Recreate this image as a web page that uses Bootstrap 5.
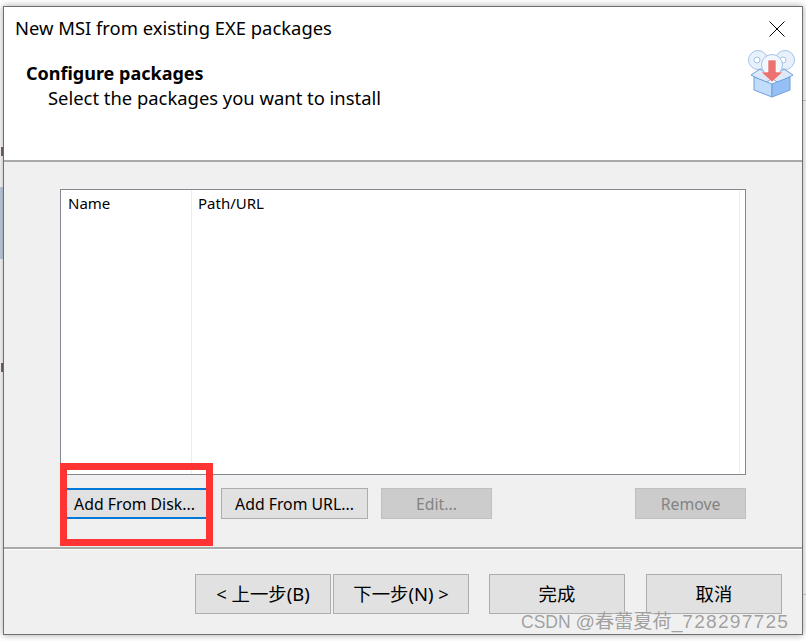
<!DOCTYPE html>
<html lang="en">
<head>
<meta charset="utf-8">
<title>New MSI from existing EXE packages</title>
<link href="https://cdn.jsdelivr.net/npm/bootstrap@5.3.0/dist/css/bootstrap.min.css" rel="stylesheet">
<style>
html,body{height:100%;}
body{margin:0;overflow:hidden;background:#fff;font-family:"Noto Sans","Noto Sans CJK SC",sans-serif;font-size:16px;color:#000;padding:6px 3px 6px 3px;
 background-image:linear-gradient(#c3d2e6,#c3d2e6),linear-gradient(#bcd0e6,#bcd0e6),linear-gradient(#c8d8ea,#c8d8ea),linear-gradient(#7a6a60,#7a6a60),linear-gradient(#7a6a60,#7a6a60);
 background-size:3px 72px,3px 1px,3px 1px,2px 9px,2px 9px;background-position:0 187px,803px 100px,803px 594px,1px 147px,1px 363px;background-repeat:no-repeat;}
.dlg-win{position:relative;width:800px;height:629px;background:#f0f0f0;border:1px solid #6f6f6f;box-shadow:0 0 7px rgba(0,0,0,.35);}
.dlg-head{height:155px;background:#fff;border-bottom:2px solid #a9a9a9;}
.dlg-titlebar{height:44px;padding:8px 0 0 11px;font-size:18.4px;line-height:26px;}
.dlg-close{width:50px;height:44px;padding:0;border:0;background:transparent;}
.dlg-heading{padding:10px 0 0 22px;}
.dlg-h1{font-weight:700;font-size:18px;line-height:24px;}
.dlg-h2{padding-left:22px;font-size:18.4px;line-height:25px;}
.dlg-icon{width:50px;height:50px;margin:-2px 5px 0 0;}
.dlg-body{height:387px;padding:27px 56px 0 56px;border-bottom:2px solid #a9a9a9;box-shadow:0 1px 0 #fff;}
.pkg-list{height:286px;background:#fff;border:1px solid #828790;display:grid;grid-template-columns:131px 1fr 5px;}
.pkg-col{border-right:1px solid #e6eef8;padding:1px 7px;font-size:15px;line-height:24px;}
.pkg-col + .pkg-col{padding-left:6px;}
.pkg-col-last{border-right:0;}
.pkg-actions{margin-top:13px;display:flex;}
.act-btn{height:31px;padding:0;font-size:15.8px;line-height:28px;background:#e1e1e1;border:1px solid #adadad;border-radius:0;color:#000;}
.act-btn:disabled{background:#ccc;border-color:#bfbfbf;color:#838383;opacity:1;}
.act-default{width:147px;margin-right:14px;padding-left:2px;border-width:2px 0;border-color:#0078d7;}
.act-url{width:147px;margin-right:13px;}
.act-edit{width:111px;margin-right:143px;}
.act-remove{width:111px;}
.dlg-foot{padding:25px 20px 0 191px;display:flex;}
.foot-btn{width:136px;height:40px;padding:0;font-size:18.4px;line-height:36px;background:#e1e1e1;border:1px solid #adadad;border-radius:0;color:#000;}
.foot-prev{margin-right:2px;}
.foot-next{margin-right:20px;}
.foot-done{margin-right:21px;}
.note-box{position:absolute;left:56px;top:456px;width:153px;height:83px;border:7px solid #fe3333;pointer-events:none;}
.wm-text{position:absolute;left:517px;top:603px;font-family:"Liberation Sans","Noto Sans CJK SC",sans-serif;font-size:19.2px;line-height:24px;color:#a0a0a0;text-shadow:0 0 1px #fff;white-space:nowrap;}
.wm-latin{font-size:17.5px;}
.wm-num{letter-spacing:1.2px;}
</style>
</head>
<body>
<div class="dlg-win">
  <div class="dlg-head">
    <div class="d-flex justify-content-between">
      <div class="dlg-titlebar">New MSI from existing EXE packages</div>
      <button class="dlg-close" type="button" aria-label="Close"><svg width="16" height="16" viewBox="0 0 16 16" class="d-block mx-auto"><path d="M.5.5l15 15M15.5.5l-15 15" stroke="#000" stroke-width="1" fill="none"/></svg></button>
    </div>
    <div class="d-flex justify-content-between">
      <div class="dlg-heading">
        <div class="dlg-h1">Configure packages</div>
        <div class="dlg-h2">Select the packages you want to install</div>
      </div>
      <svg class="dlg-icon" viewBox="0 0 50 50">
        <circle cx="11" cy="11" r="9.5" fill="#e8f1fb" stroke="#a4c3e8"/>
        <circle cx="10" cy="11" r="3" fill="#fff" stroke="#a4c3e8"/>
        <circle cx="38" cy="11" r="9.5" fill="#e8f1fb" stroke="#a4c3e8"/>
        <circle cx="36" cy="11" r="3" fill="#fff" stroke="#a4c3e8"/>
        <circle cx="25" cy="16" r="10.5" fill="#f2f7fd" stroke="#a4c3e8"/>
        <path d="M4 26l9-6 12 9-6 5z" fill="#dbe9fa" stroke="#6f9fdc"/>
        <path d="M46 26l-9-6-12 9 6 5z" fill="#dbe9fa" stroke="#6f9fdc"/>
        <path d="M7 28l18 7v13L7 41z" fill="#c2dcfb" stroke="#6f9fdc"/>
        <path d="M43 28l-18 7v13l18-7z" fill="#94c0f6" stroke="#6f9fdc"/>
        <path d="M21 11h8v12h7L25 33 14 23h7z" fill="#ec7272" stroke="#fff" stroke-width=".6"/>
      </svg>
    </div>
  </div>
  <div class="dlg-body">
    <div class="pkg-list">
      <div class="pkg-col">Name</div>
      <div class="pkg-col">Path/URL</div>
      <div class="pkg-col pkg-col-last"></div>
    </div>
    <div class="pkg-actions">
      <button class="btn act-btn act-default" type="button">Add From Disk...</button>
      <button class="btn act-btn act-url" type="button">Add From URL...</button>
      <button class="btn act-btn act-edit" type="button" disabled>Edit...</button>
      <button class="btn act-btn act-remove" type="button" disabled>Remove</button>
    </div>
  </div>
  <div class="dlg-foot">
    <button class="btn foot-btn foot-prev" type="button">&lt; 上一步(B)</button>
    <button class="btn foot-btn foot-next" type="button">下一步(N) &gt;</button>
    <button class="btn foot-btn foot-done" type="button">完成</button>
    <button class="btn foot-btn" type="button">取消</button>
  </div>
  <div class="note-box"></div>
  <div class="wm-text"><span class="wm-latin">CSDN </span>@春蕾夏荷_<span class="wm-num">728297725</span></div>
</div>
<script src="https://cdn.jsdelivr.net/npm/bootstrap@5.3.0/dist/js/bootstrap.bundle.min.js"></script>
</body>
</html>
